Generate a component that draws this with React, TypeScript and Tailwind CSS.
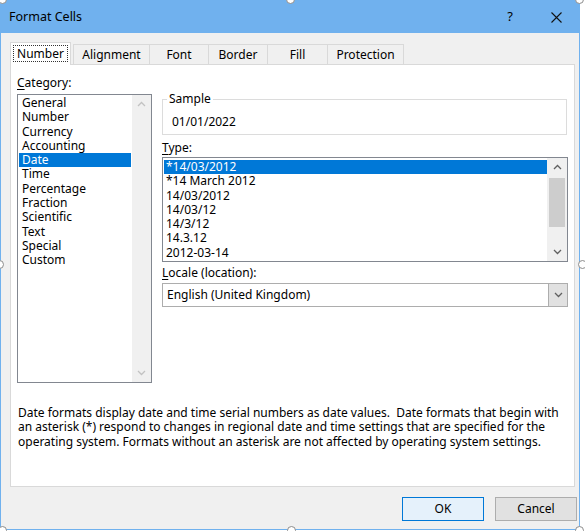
import React from "react"

const categories = ["General", "Number", "Currency", "Accounting", "Date", "Time", "Percentage", "Fraction", "Scientific", "Text", "Special", "Custom"]
const types = ["*14/03/2012", "*14 March 2012", "14/03/2012", "14/03/12", "14/3/12", "14.3.12", "2012-03-14"]

const Chevron = ({ up }: { up?: boolean }) => (
  <svg width="9" height="6" viewBox="0 0 9 6">
    <polyline points={up ? "1,5 4.5,1.5 8,5" : "1,1 4.5,4.5 8,1"} fill="none" stroke="currentColor" strokeWidth="1.3" />
  </svg>
)

const Handle = ({ className }: { className: string }) => (
  <div className={`absolute w-[9px] h-[9px] rounded-full bg-white border border-[#8c8c8c] ${className}`} />
)

export default function App() {
  return (
    <div className="relative w-[585px] h-[531px] bg-white overflow-hidden font-['Noto_Sans',sans-serif] text-[12px] text-black">
      <div className="w-[580px] h-[530px] border border-[#70b1ee] flex flex-col bg-[#f0f0f0]">
        {/* title bar */}
        <div className="h-[32px] bg-[#70b1ee] flex items-center pl-[8px] shrink-0">
          <span className="text-[12.5px]">Format Cells</span>
          <div className="ml-auto flex h-full">
            <div className="w-[46px] flex items-center justify-center text-[13px]">?</div>
            <div className="w-[46px] flex items-center justify-center">
              <svg width="11" height="11" viewBox="0 0 11 11">
                <path d="M0.5 0.5 L10.5 10.5 M10.5 0.5 L0.5 10.5" stroke="#111" strokeWidth="1.1" />
              </svg>
            </div>
          </div>
        </div>

        {/* tabs */}
        <div className="pt-[9px] pl-[9px]">
          <div className="flex items-end h-[23px] -mb-px relative z-10">
            <div className="w-[61px] h-[23px] bg-white border border-b-0 border-[#d9d9d9] flex items-start justify-center pt-[2px]">
              <span className="border border-dotted border-[#333] px-[3px] leading-[15px]">Number</span>
            </div>
            <div className="ml-[2px] w-[77px] h-[21px] border border-b-0 border-[#d9d9d9] flex items-center justify-center">Alignment</div>
            <div className="w-[59px] h-[21px] border border-l-0 border-b-0 border-[#d9d9d9] flex items-center justify-center">Font</div>
            <div className="w-[59px] h-[21px] border border-l-0 border-b-0 border-[#d9d9d9] flex items-center justify-center">Border</div>
            <div className="w-[60px] h-[21px] border border-l-0 border-b-0 border-[#d9d9d9] flex items-center justify-center">Fill</div>
            <div className="w-[76px] h-[21px] border border-l-0 border-b-0 border-[#d9d9d9] flex items-center justify-center">Protection</div>
          </div>

          {/* panel */}
          <div className="w-[565px] h-[423px] bg-white border border-[#d9d9d9] pl-[6px] pt-[11px] flex flex-col">
            <div className="flex">
              {/* category */}
              <div className="w-[135px]">
                <div className="leading-[14px] h-[14px]">
                  <u className="underline-offset-2">C</u>ategory:
                </div>
                <div className="mt-[4px] h-[289px] border border-[#828790] flex">
                  <div className="flex-1 pt-[1px] px-[1px]">
                    {categories.map((c) => (
                      <div
                        key={c}
                        className={c === "Date" ? "h-[14.3px] leading-[14.3px] pl-[3px] bg-[#0078d7] text-white" : "h-[14.3px] leading-[14.3px] pl-[3px]"}
                      >
                        {c}
                      </div>
                    ))}
                  </div>
                  <div className="w-[19px] bg-[#f0f0f0] flex flex-col justify-between text-[#c2c2c2]">
                    <div className="h-[18px] flex items-center justify-center"><Chevron up /></div>
                    <div className="h-[18px] flex items-center justify-center"><Chevron /></div>
                  </div>
                </div>
              </div>

              {/* right side */}
              <div className="ml-[10px] w-[406px]">
                <fieldset className="mt-[16px] mr-[1px] border border-[#dcdcdc] pl-[9px] pt-[9px] pb-[5px]">
                  <legend className="ml-[-5px] px-[2px] leading-[14px]">Sample</legend>
                  <div className="leading-[14px]">01/01/2022</div>
                </fieldset>

                <div className="mt-[6px] leading-[14px] h-[14px]">
                  <u className="underline-offset-2">T</u>ype:
                </div>
                <div className="mt-[2px] h-[105px] border border-[#828790] flex">
                  <div className="flex-1 pt-[2px] pl-[1px]">
                    {types.map((t, i) => (
                      <div
                        key={t}
                        className={i === 0 ? "h-[14.3px] leading-[14.3px] pl-[2px] bg-[#0078d7] text-white" : "h-[14.3px] leading-[14.3px] pl-[2px]"}
                      >
                        {t}
                      </div>
                    ))}
                  </div>
                  <div className="w-[20px] bg-[#f0f0f0] flex flex-col text-[#606060]">
                    <div className="h-[18px] flex items-center justify-center"><Chevron up /></div>
                    <div className="mt-[2px] mx-[2px] h-[49px] bg-[#cdcdcd]" />
                    <div className="flex-1" />
                    <div className="h-[18px] flex items-center justify-center"><Chevron /></div>
                  </div>
                </div>

                <div className="mt-[4px] leading-[14px] h-[14px]">
                  <u className="underline-offset-2">L</u>ocale (location):
                </div>
                <div className="mt-[3px] h-[24px] border border-[#adadad] bg-white flex items-center">
                  <span className="pl-[4px] flex-1">English (United Kingdom)</span>
                  <div className="w-[19px] h-full bg-[#e1e1e1] border-l border-[#adadad] flex items-center justify-center text-[#606060]">
                    <Chevron />
                  </div>
                </div>
              </div>
            </div>

            {/* description */}
            <div className="mt-[23px] ml-[1px] leading-[14.3px] whitespace-pre">
              <div>Date formats display date and time serial numbers as date values.  Date formats that begin with</div>
              <div>an asterisk (*) respond to changes in regional date and time settings that are specified for the</div>
              <div>operating system. Formats without an asterisk are not affected by operating system settings.</div>
            </div>
          </div>
        </div>

        {/* buttons */}
        <div className="mt-[10px] flex justify-end pr-[2px] gap-[11px]">
          <button className="w-[82px] h-[24px] border border-[#0078d7] bg-[#e5f1fb]">OK</button>
          <button className="w-[82px] h-[24px] border border-[#adadad] bg-[#e1e1e1]">Cancel</button>
        </div>
      </div>

      <Handle className="left-[-2px] top-[-5px]" />
      <Handle className="left-[286px] top-[-5px]" />
      <Handle className="left-[575px] top-[-5px]" />
      <Handle className="left-[-5px] top-[260px]" />
      <Handle className="left-[578px] top-[260px]" />
      <Handle className="left-[-2px] top-[526px]" />
      <Handle className="left-[287px] top-[526px]" />
      <Handle className="left-[575px] top-[526px]" />
    </div>
  )
}
